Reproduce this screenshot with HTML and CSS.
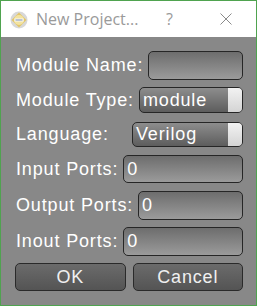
FILE: index.html
```html
<!DOCTYPE html>
<html>
<head>
<meta charset="utf-8">
<link rel="stylesheet" href="styles.css">
</head>
<body>
<div class="window">
  <div class="titlebar">
    <svg class="app-icon" width="18" height="18" viewBox="0 0 18 18">
      <circle cx="9" cy="9" r="8.5" fill="#d8d8d8"/>
      <polygon points="9,1.5 16.5,9 9,16.5 1.5,9" fill="#e2c66a"/>
      <circle cx="9" cy="9" r="5" fill="#f3e3a0"/>
      <rect x="4.5" y="7.5" width="9" height="3" fill="#f7f7f7"/>
      <rect x="5.5" y="8.5" width="7" height="1" fill="#7d8fb0"/>
    </svg>
    <span class="title">New Project...</span>
    <span class="help">?</span>
    <svg class="close" width="12" height="12" viewBox="0 0 12 12">
      <path d="M0.5 0.5 L11.5 11.5 M11.5 0.5 L0.5 11.5" stroke="#8a8a8a" stroke-width="1" fill="none"/>
    </svg>
  </div>
  <div class="content">
    <div class="row r1">
      <span class="label">Module Name:</span>
      <div class="field text"></div>
    </div>
    <div class="row r2">
      <span class="label">Module Type:</span>
      <div class="field combo"><span class="value">module</span><span class="arrow"></span></div>
    </div>
    <div class="row r3">
      <span class="label lang">Language:</span>
      <div class="field combo"><span class="value">Verilog</span><span class="arrow"></span></div>
    </div>
    <div class="row r4">
      <span class="label">Input Ports:</span>
      <div class="field text"><span class="value">0</span></div>
    </div>
    <div class="row r5">
      <span class="label">Output Ports:</span>
      <div class="field text"><span class="value">0</span></div>
    </div>
    <div class="row r6">
      <span class="label">Inout Ports:</span>
      <div class="field text"><span class="value">0</span></div>
    </div>
    <div class="buttons">
      <div class="btn ok">OK</div>
      <div class="btn cancel">Cancel</div>
    </div>
  </div>
</div>
</body>
</html>
```

FILE: styles.css
```css
* { box-sizing: border-box; }
html, body { margin: 0; padding: 0; }
body {
  width: 257px;
  height: 306px;
  overflow: hidden;
  font-family: "Liberation Sans", Arial, sans-serif;
}
.window {
  width: 257px;
  height: 306px;
  border: 1px solid #4fa34f;
  display: flex;
  flex-direction: column;
  background: #888888;
}
.titlebar {
  height: 36px;
  background: #ffffff;
  display: flex;
  align-items: center;
  padding-left: 9px;
  flex: none;
}
.app-icon { flex: none; margin-top: 1px; }
.title {
  font-family: "Open Sans", "Noto Sans", sans-serif;
  font-size: 16px;
  color: #9a9a9a;
  margin-left: 8px;
  margin-top: -1px;
  width: 130px;
  white-space: nowrap;
}
.help {
  font-family: "Open Sans", "Noto Sans", sans-serif;
  font-size: 16px;
  color: #9a9a9a;
  margin-top: -1px;
  width: 8px;
}
.close { margin-left: 46px; flex: none; }
.content {
  flex: 1;
  padding: 14px 13px 0 14px;
  display: flex;
  flex-direction: column;
}
.row {
  display: flex;
  align-items: center;
}
.r1 { height: 29px; margin-bottom: 7px; }
.r2 { height: 26px; margin-bottom: 9px; }
.r3 { height: 25px; margin-bottom: 8px; }
.r4 { height: 28px; margin-bottom: 8px; }
.r5 { height: 29px; margin-bottom: 7px; }
.r6 { height: 29px; margin-bottom: 7px; }
.label {
  color: #ffffff;
  font-size: 18px;
  letter-spacing: 0.85px;
  padding-left: 1px;
  white-space: nowrap;
  margin-right: 5px;
}
.label.lang { width: 112px; }
.field {
  flex: 1;
  height: 100%;
  border: 1px solid #262626;
  border-radius: 5px;
  display: flex;
  align-items: center;
  color: #ffffff;
  font-size: 18px;
  letter-spacing: 0.85px;
  overflow: hidden;
}
.text {
  background: linear-gradient(#6d6d6d, #9b9b9b);
}
.text .value { padding-left: 3px; }
.combo {
  background: linear-gradient(#8d8d8d, #5d5d5d);
}
.combo .value { flex: 1; padding-left: 3px; }
.arrow {
  width: 14px;
  height: 100%;
  background: linear-gradient(#f2f2f2, #d4d4d4);
}
.buttons {
  display: flex;
  gap: 7px;
  height: 28px;
}
.btn {
  flex: 1;
  border: 1px solid #2a2a2a;
  border-radius: 5px;
  background: linear-gradient(#6b6b6b, #545454);
  color: #f0f0f0;
  font-size: 18px;
  letter-spacing: 0.85px;
  display: flex;
  align-items: center;
  justify-content: center;
}
```
